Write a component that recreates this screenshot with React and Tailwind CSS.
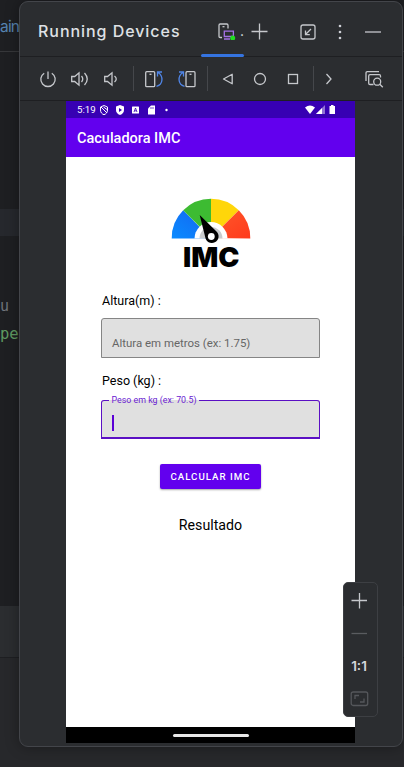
function Icon({ className = '', children }) {
  return (
    <svg
      viewBox="0 0 20 20"
      className={`h-5 w-5 shrink-0 ${className}`}
      fill="none"
      stroke="#c6c8cc"
      strokeWidth="1.3"
    >
      {children}
    </svg>
  )
}

function Separator({ className }) {
  return <div className={`h-[25px] w-px shrink-0 bg-[#45474b] ${className}`} />
}

function EditorBackdrop() {
  return (
    <div className="absolute inset-0 flex flex-col bg-[#1e1f22] font-['Inter',sans-serif]">
      <div className="h-[52px] border-b border-[#36373a] pt-[17px] text-[15.5px] leading-5 tracking-[-0.8px] text-[#5582b0]">
        ain
      </div>
      <div className="mt-[157px] h-[27px] bg-[#26282d]" />
      <div className="mt-[60px] font-['DejaVu_Sans_Mono',monospace] text-[15px] leading-5 text-[#6f737a]">u</div>
      <div className="mt-[8px] font-['DejaVu_Sans_Mono',monospace] text-[15.5px] leading-5 text-[#5f9a61]">pe</div>
      <div className="mt-[262px] h-[52px] border-b border-[#1e1f22] bg-[#2b2d30]" />
      <div className="flex-1 bg-[#27282b]" />
    </div>
  )
}

function Header() {
  return (
    <div className="flex h-[55px] items-start border-b border-[#1e1f22]">
      <h1 className="ml-[18px] mt-[18px] w-[163px] whitespace-nowrap font-['Inter',sans-serif] text-[16px] font-medium leading-[22px] tracking-[0.95px] text-[#dfe1e5]">
        Running Devices
      </h1>
      <div className="flex h-[55px] w-[43px] flex-col">
        <div className="flex flex-1 pt-[18px]">
          <Icon className="ml-[16px]">
            <path d="M5 17.500H3.200Q2 17.500 2 16.300V5.200Q2 4 3.200 4H9.800Q11 4 11 5.200V8.500" />
            <path d="M5.500 6.700H7.500" />
            <path d="M7.300 11.200H16.400V16.500H7.300ZM7 19H13" stroke="#a571e6" />
            <circle cx="15.700" cy="18" r="2.500" fill="#22dd22" stroke="none" />
          </Icon>
          <span className="ml-[3px] mt-[1px] font-['Inter',sans-serif] text-[14px] leading-5 text-[#dfe1e5]">.</span>
        </div>
        <div className="h-[3px] rounded-full bg-[#3574e0]" />
      </div>
      <Icon className="ml-[6px] mt-[19px]">
        <path d="M1.500 10.500H17.500M9.500 2.500V18.500" />
      </Icon>
      <Icon className="ml-[28px] mt-[19px]">
        <rect x="3" y="4" width="14" height="14" rx="2" />
        <path d="M13 8L7.500 13.500M7.500 9.500V13.700H11.800" />
      </Icon>
      <Icon className="ml-[12px] mt-[19px]">
        <g fill="#ced0d6" stroke="none">
          <circle cx="10" cy="5" r="1.300" />
          <circle cx="10" cy="11" r="1.300" />
          <circle cx="10" cy="17" r="1.300" />
        </g>
      </Icon>
      <Icon className="ml-[13px] mt-[19px]">
        <path d="M2 11H18" />
      </Icon>
    </div>
  )
}

function Toolbar() {
  return (
    <div className="flex h-[44px] items-center border-b border-[#1e1f22]">
      <Icon className="ml-[18px]">
        <path d="M6.200 4.200A7.200 7.200 0 1 0 13.800 4.200M10 2.500V10" />
      </Icon>
      <Icon className="ml-[12px]">
        <path d="M1.700 7.500H4.700L9 3.800V16.200L4.700 12.500H1.700Z" />
        <path d="M11.500 7Q14 10 11.500 13M14.500 4Q20 10 14.500 16" />
      </Icon>
      <Icon className="ml-[11px]">
        <path d="M3.700 7.500H6.500L11 3.800V16.200L6.500 12.500H3.700Z" />
        <path d="M13.500 7Q17 10 13.500 13" />
      </Icon>
      <Separator className="ml-[12px]" />
      <Icon className="ml-[10px]">
        <rect x="1.700" y="2.700" width="9" height="15" rx="1" />
        <path d="M5.500 5.300H7.500" />
        <path d="M12.500 17.300C19.500 15.500 19.500 7 14 3.500M13.500 7.500V3H18" stroke="#5086e8" />
      </Icon>
      <Icon className="ml-[13px]">
        <rect x="9" y="2.700" width="9" height="15" rx="1" />
        <path d="M12.500 5.300H14.500" />
        <path d="M7.500 17.300C.5 15.500 .5 7 6 3.500M6.500 7.500V3H2" stroke="#5086e8" />
      </Icon>
      <Separator className="ml-[10px]" />
      <Icon className="ml-[10px]">
        <path d="M5.500 10L14.200 5.200V14.800Z" strokeLinejoin="round" />
      </Icon>
      <Icon className="ml-[12px]">
        <circle cx="10" cy="10" r="5.500" />
      </Icon>
      <Icon className="ml-[13px]">
        <rect x="5.500" y="5.500" width="9" height="9" />
      </Icon>
      <Separator className="ml-[10px]" />
      <Icon className="ml-[4px]">
        <path d="M8.500 5L13 10L8.500 15" />
      </Icon>
      <Icon className="ml-[26px]">
        <path d="M2 12V3.800Q2 2.700 3.200 2.700H15" />
        <path d="M9.500 15.500H6Q4.700 15.500 4.700 14.300V7Q4.700 5.700 6 5.700H15.300Q16.500 5.700 16.500 7V8.500" />
        <circle cx="13.200" cy="12.700" r="3.500" />
        <path d="M15.800 15.300L18.800 18.300" />
      </Icon>
    </div>
  )
}

function StatusBar() {
  return (
    <div className="flex h-[17px] items-center bg-[#3700b3] pl-[12px] text-white">
      <span className="-ml-[1px] w-[22px] whitespace-nowrap text-[9.700px] leading-[16px]">5:19</span>
      <svg viewBox="0 0 70 12" className="h-3 w-[70px] shrink-0">
        <path d="M5 1.500L8.500 3V6C8.500 8.500 7 10 5 10.700C3 10 1.500 8.500 1.500 6V3ZM2 3L8 9M4.500 3L8 5.500" fill="none" stroke="white" />
        <path d="M21 1L25 2.500V6C25 8.500 23.500 10 21 11C18.500 10 17 8.500 17 6V2.500Z" fill="white" />
        <path d="M20 4V8L23 6Z" fill="#3700b3" />
        <rect x="33" y="2.500" width="7" height="7" rx=".5" fill="white" />
        <path d="M35 8L36.500 4L38 8M35.500 6.800H37.500" fill="none" stroke="#3700b3" strokeWidth=".8" />
        <path d="M52 1.500H56V10.500H49V4.500Z" fill="white" />
        <path d="M52 3V5M54 3V5" stroke="#3700b3" strokeWidth=".7" />
        <circle cx="67.500" cy="6" r="1.200" fill="white" />
      </svg>
      <svg viewBox="0 0 32 12" className="ml-[136px] h-3 w-8 shrink-0" fill="white">
        <path d="M0 3.500Q5 -.5 10 3.500L5 10Z" />
        <path d="M11 10L20 1V10Z" opacity=".45" />
        <path d="M11 10L17 4V10Z" />
        <path d="M24.500 2H26V1H28.500V2H30V10H24.500Z" />
      </svg>
    </div>
  )
}

function Logo() {
  return (
    <svg viewBox="0 0 84 78" className="ml-[103.500px] mt-[38.500px] h-[78px] w-[84px] shrink-0 overflow-visible">
      <defs>
        <linearGradient id="blue" x1="0" y1="1" x2="1" y2="0">
          <stop offset="0" stopColor="#0a8bff" />
          <stop offset="1" stopColor="#1464ef" />
        </linearGradient>
        <linearGradient id="red" x1="0" y1="0" x2="1" y2="1">
          <stop offset="0" stopColor="#ff5a2b" />
          <stop offset="1" stopColor="#ff3a1c" />
        </linearGradient>
      </defs>
      <path d="M41 42.500H1.700A39.300 39.300 0 0 1 13.200 14.200Z" fill="url(#blue)" />
      <path d="M41 42L13.200 14.200A39.300 39.300 0 0 1 41 2.700Z" fill="#3dbb32" />
      <path d="M41 42V2.700A39.300 39.300 0 0 1 68.800 14.200Z" fill="#ffd60a" />
      <path d="M41 42L68.800 14.200A39.300 39.300 0 0 1 80.300 42.500Z" fill="url(#red)" />
      <path d="M24.500 42.600A16.500 16.500 0 0 1 57.500 42.600Z" fill="white" />
      <path d="M29.500 42.500A11.500 11.500 0 0 1 52.500 42.500Z" fill="#c9cbcd" />
      <circle cx="41.500" cy="40.500" r="5.500" fill="white" />
      <path d="M29.700 19L46.500 35.500A6.700 6.700 0 1 1 35.200 41Z" fill="black" />
      <circle cx="41.300" cy="40.500" r="3.400" fill="white" />
      <text x="13" y="71" textLength="56.500" lengthAdjust="spacingAndGlyphs" className="font-['Inter',sans-serif] text-[27.500px] font-black">
        IMC
      </text>
    </svg>
  )
}

function CalculatorScreen() {
  return (
    <div className="flex h-[570px] flex-col bg-white text-black">
      <Logo />
      <label className="ml-[36px] mt-[18px] text-[12.500px] leading-[18px]">Altura(m) :</label>
      <div className="ml-[35px] mt-[8.500px] flex h-[40px] w-[219px] items-center rounded-t-[3px] border border-[#858585] bg-[#e0e0e0] pl-[10px] pt-[11px] text-[11.450px] text-[#666]">
        Altura em metros (ex: 1.75)
      </div>
      <label className="ml-[36px] mt-[14px] text-[12.500px] leading-[18px]">Peso (kg) :</label>
      <fieldset className="ml-[35px] mt-[6px] h-[43px] w-[219px] rounded-t-[3px] border-[1.500px] border-b-2 border-[#5b10c4] bg-[#e0e0e0] pl-[7px]">
        <legend className="h-[9px] whitespace-nowrap px-[2.500px] text-[8.850px] leading-[9px] text-[#6a1bd1]">
          Peso em kg (ex: 70.5)
        </legend>
        <div className="ml-[2.500px] mt-[10px] h-[16px] w-[2px] bg-[#5b00d6]" />
      </fieldset>
      <button className="ml-[94px] mt-[25px] h-[25px] w-[101px] whitespace-nowrap rounded-[2px] bg-[#6200ee] text-[9.700px] font-medium leading-[25px] tracking-[1px] text-white shadow-[0_1px_2px_rgba(0,0,0,0.35)]">
        CALCULAR IMC
      </button>
      <div className="mt-[26px] text-center text-[14.200px] leading-[20px]">Resultado</div>
    </div>
  )
}

function Phone() {
  return (
    <div className="ml-[46px] w-[289px] font-['Roboto',sans-serif]">
      <StatusBar />
      <div className="flex h-[39px] items-center bg-[#6200ee] pl-[11px] pt-[2px] text-[14.500px] font-medium text-white">
        Caculadora IMC
      </div>
      <CalculatorScreen />
      <div className="flex h-[16px] items-center justify-center bg-black">
        <div className="h-[3px] w-[76px] rounded-full bg-[#e8e8e8]" />
      </div>
    </div>
  )
}

function ZoomControls() {
  return (
    <div className="absolute left-[343px] top-[582px] flex h-[135px] w-[35px] flex-col items-start rounded-[5px] border border-[#3d3f43] bg-[#2b2d30] pl-[5px]">
      <Icon className="mt-[8px]">
        <path d="M2.500 9.500H18M10.500 2V17.500" />
      </Icon>
      <Icon className="mt-[12px]">
        <path d="M2.500 10.500H18" stroke="#5a5c60" />
      </Icon>
      <div className="mt-[13px] h-5 w-5 text-center font-['Inter',sans-serif] text-[13.500px] font-semibold leading-5 text-[#d5d7db]">
        1:1
      </div>
      <Icon className="mt-[13px]">
        <g stroke="#55575b">
          <rect x="2.200" y="3" width="16.500" height="13.500" rx="2" />
          <path d="M6 10V6.500H10M15 9.500V13H11" />
        </g>
      </Icon>
    </div>
  )
}

export default function App() {
  return (
    <div className="relative h-[767px] w-[404px] overflow-hidden">
      <EditorBackdrop />
      <div className="relative flex flex-col pl-[19px] pt-[1px]">
        <div className="h-[746px] w-[384px] rounded-[9px] border border-[#43454a] bg-[#2b2d30] shadow-[0_0_14px_rgba(0,0,0,0.35)]">
          <Header />
          <Toolbar />
          <Phone />
        </div>
      </div>
      <ZoomControls />
    </div>
  )
}
